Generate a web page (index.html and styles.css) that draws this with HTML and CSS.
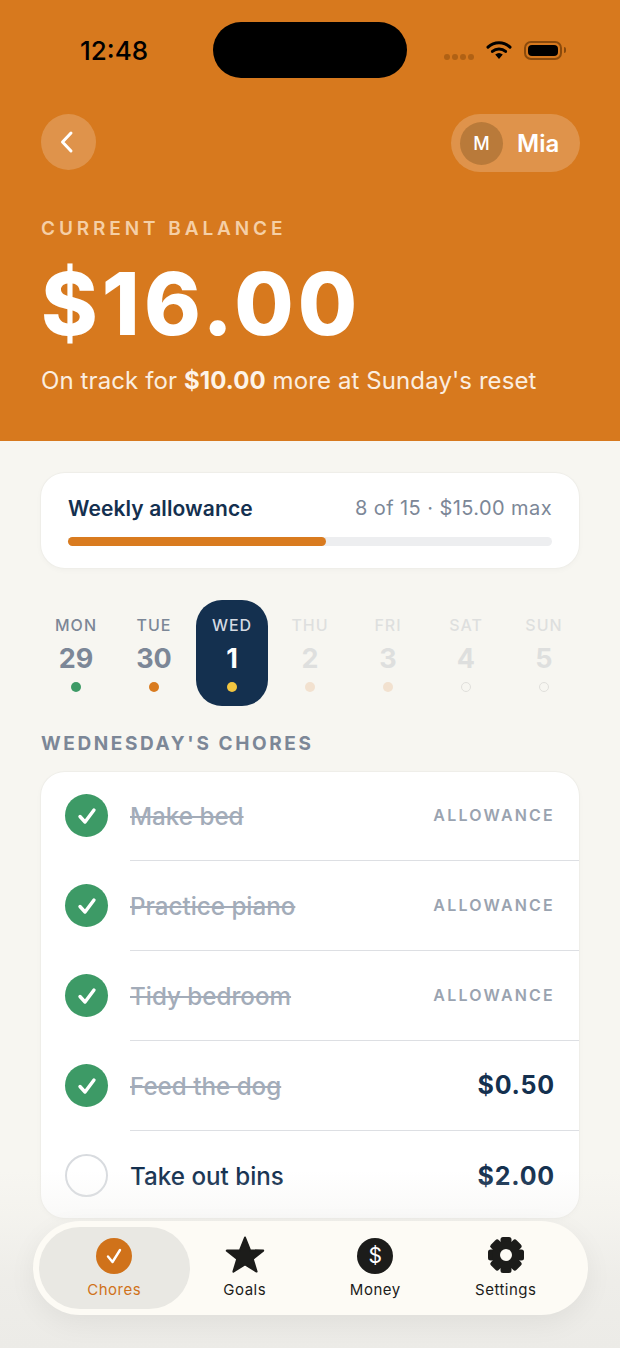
FILE: index.html
```html
<!DOCTYPE html>
<html lang="en">
<head>
  <meta charset="UTF-8">
  <meta name="viewport" content="width=device-width, initial-scale=1.0">
  <title>Chores</title>
  <link rel="stylesheet" href="styles.css">
</head>
<body>

<div class="screen">

  <!-- Orange header -->
  <div class="hero">
    <div class="status-bar">
      <span class="time">12:48</span>
      <div class="island"></div>
      <div class="status-icons">
        <div class="signal"><i></i><i></i><i></i><i></i></div>
        <svg class="wifi" width="26" height="20" viewBox="0 0 26 20">
          <path d="M2 7.2a16 16 0 0 1 22 0" fill="none" stroke="#000" stroke-width="3" stroke-linecap="round"/>
          <path d="M6.4 11.4a10 10 0 0 1 13.2 0" fill="none" stroke="#000" stroke-width="3" stroke-linecap="round"/>
          <path d="M9.2 14.6 13 19l3.8-4.4a6 6 0 0 0-7.6 0z" fill="#000"/>
        </svg>
        <div class="battery"><div class="battery-fill"></div></div>
        <div class="battery-tip"></div>
      </div>
    </div>

    <div class="top-row">
      <div class="back-btn">
        <svg width="16" height="24" viewBox="0 0 16 24">
          <path d="M12 3 3.5 12 12 21" fill="none" stroke="#fff" stroke-width="3" stroke-linecap="round" stroke-linejoin="round"/>
        </svg>
      </div>
      <div class="profile">
        <div class="avatar">M</div>
        <span class="profile-name">Mia</span>
      </div>
    </div>

    <div class="balance-label">CURRENT BALANCE</div>
    <div class="balance">$16.00</div>
    <div class="balance-note">On track for <b>$10.00</b> more at Sunday's reset</div>
  </div>

  <!-- Main Content -->
  <div class="content">

    <div class="allowance-card">
      <div class="allowance-head">
        <span class="allowance-title">Weekly allowance</span>
        <span class="allowance-info">8 of 15 · $15.00 max</span>
      </div>
      <div class="progress"><div class="progress-fill" style="width: 53.3%"></div></div>
    </div>

    <div class="days">
      <div class="day"><span class="day-name">MON</span><span class="day-num">29</span><span class="dot dot-green"></span></div>
      <div class="day"><span class="day-name">TUE</span><span class="day-num">30</span><span class="dot dot-orange"></span></div>
      <div class="day active"><span class="day-name">WED</span><span class="day-num">1</span><span class="dot dot-yellow"></span></div>
      <div class="day future"><span class="day-name">THU</span><span class="day-num">2</span><span class="dot dot-peach"></span></div>
      <div class="day future"><span class="day-name">FRI</span><span class="day-num">3</span><span class="dot dot-peach"></span></div>
      <div class="day future"><span class="day-name">SAT</span><span class="day-num">4</span><span class="dot dot-empty"></span></div>
      <div class="day future"><span class="day-name">SUN</span><span class="day-num">5</span><span class="dot dot-empty"></span></div>
    </div>

    <h2 class="section-title">WEDNESDAY'S CHORES</h2>

    <div class="chores">
      <div class="chore">
        <div class="check done"><svg width="22" height="20" viewBox="0 0 22 20"><path d="M4 10.5 9 16 18 4" fill="none" stroke="#fff" stroke-width="3.4" stroke-linecap="round" stroke-linejoin="round"/></svg></div>
        <div class="chore-body"><span class="chore-name">Make bed</span><span class="chore-tag">ALLOWANCE</span></div>
      </div>
      <div class="chore">
        <div class="check done"><svg width="22" height="20" viewBox="0 0 22 20"><path d="M4 10.5 9 16 18 4" fill="none" stroke="#fff" stroke-width="3.4" stroke-linecap="round" stroke-linejoin="round"/></svg></div>
        <div class="chore-body"><span class="chore-name">Practice piano</span><span class="chore-tag">ALLOWANCE</span></div>
      </div>
      <div class="chore">
        <div class="check done"><svg width="22" height="20" viewBox="0 0 22 20"><path d="M4 10.5 9 16 18 4" fill="none" stroke="#fff" stroke-width="3.4" stroke-linecap="round" stroke-linejoin="round"/></svg></div>
        <div class="chore-body"><span class="chore-name">Tidy bedroom</span><span class="chore-tag">ALLOWANCE</span></div>
      </div>
      <div class="chore">
        <div class="check done"><svg width="22" height="20" viewBox="0 0 22 20"><path d="M4 10.5 9 16 18 4" fill="none" stroke="#fff" stroke-width="3.4" stroke-linecap="round" stroke-linejoin="round"/></svg></div>
        <div class="chore-body"><span class="chore-name">Feed the dog</span><span class="chore-price">$0.50</span></div>
      </div>
      <div class="chore todo">
        <div class="check"></div>
        <div class="chore-body"><span class="chore-name">Take out bins</span><span class="chore-price">$2.00</span></div>
      </div>
    </div>
  </div>

  <!-- Fade under the tab bar -->
  <div class="bottom-fade"></div>

  <!-- Tab bar -->
  <div class="tab-bar">
    <div class="tab active">
      <div class="tab-coin tab-coin-orange">
        <svg width="22" height="22" viewBox="0 0 22 22"><path d="M5 11.5 9.5 17 17 5" fill="none" stroke="#fff" stroke-width="2.4" stroke-linecap="round" stroke-linejoin="round"/></svg>
      </div>
      <span>Chores</span>
    </div>
    <div class="tab">
      <svg width="40" height="40" viewBox="0 0 40 40"><path d="M20 2.5 25 15.2 38.2 15.6 27.8 24 31.6 36.6 20 29.4 8.4 36.6 12.2 24 1.8 15.6 15 15.2z" fill="#1c1c1a" stroke="#1c1c1a" stroke-width="2" stroke-linejoin="round"/></svg>
      <span>Goals</span>
    </div>
    <div class="tab">
      <div class="tab-coin">$</div>
      <span>Money</span>
    </div>
    <div class="tab">
      <svg width="40" height="40" viewBox="0 0 40 40">
        <g fill="#1c1c1a">
          <rect x="14.5" y="2" width="11" height="36" rx="2.5"/>
          <rect x="14.5" y="2" width="11" height="36" rx="2.5" transform="rotate(45 20 20)"/>
          <rect x="14.5" y="2" width="11" height="36" rx="2.5" transform="rotate(90 20 20)"/>
          <rect x="14.5" y="2" width="11" height="36" rx="2.5" transform="rotate(135 20 20)"/>
          <circle cx="20" cy="20" r="14"/>
        </g>
        <circle cx="20" cy="20" r="6" fill="#fdfbf5"/>
      </svg>
      <span>Settings</span>
    </div>
  </div>

</div>

</body>
</html>
```

FILE: styles.css
```css
/* Base Styles */
* {
  margin: 0;
  padding: 0;
  box-sizing: border-box;
  font-family: Inter, "Liberation Sans", sans-serif;
}

body {
  background-color: #f7f6f1;
}

.screen {
  position: relative;
  width: 620px;
  height: 1348px;
  overflow: hidden;
}

/* Header */
.hero {
  height: 441px;
  background: #d7791e;
  padding: 22px 40px 0 41px;
  color: white;
}

.status-bar {
  position: relative;
  display: flex;
  justify-content: space-between;
  align-items: center;
  height: 56px;
  padding: 0 14px 0 39px;
}

.time {
  color: #000;
  font-size: 26px;
  font-weight: 500;
}

.island {
  position: absolute;
  left: 172px;
  top: 0;
  width: 194px;
  height: 56px;
  border-radius: 28px;
  background: #000;
}

.status-icons {
  display: flex;
  align-items: center;
}

.signal {
  display: flex;
  gap: 2px;
  margin: 14px 12px 0 0;
  opacity: 0.5;
}

.signal i {
  width: 6px;
  height: 6px;
  border-radius: 50%;
  background: #8a4a0c;
}

.wifi {
  margin-right: 12px;
}

.battery {
  width: 38px;
  height: 19px;
  padding: 2px;
  border: 2px solid #8a4a0c;
  border-radius: 7px;
}

.battery-fill {
  height: 100%;
  border-radius: 4px;
  background: #000;
}

.battery-tip {
  width: 2px;
  height: 6px;
  margin-left: 2px;
  border-radius: 0 2px 2px 0;
  background: #8a4a0c;
}

.top-row {
  display: flex;
  justify-content: space-between;
  align-items: flex-start;
  margin-top: 36px;
}

.back-btn {
  display: flex;
  align-items: center;
  justify-content: center;
  width: 55px;
  height: 56px;
  padding-right: 4px;
  border-radius: 50%;
  background: rgba(255, 255, 255, 0.2);
}

.profile {
  display: flex;
  align-items: center;
  gap: 14px;
  width: 129px;
  height: 58px;
  padding-left: 9px;
  border-radius: 29px;
  background: rgba(255, 255, 255, 0.2);
}

.avatar {
  display: flex;
  align-items: center;
  justify-content: center;
  width: 43px;
  height: 43px;
  border-radius: 50%;
  background: #b97a3a;
  font-size: 18px;
  font-weight: 500;
}

.profile-name {
  font-size: 24px;
  font-weight: 600;
}

.balance-label {
  margin-top: 45px;
  color: #f5cfa6;
  font-size: 19px;
  font-weight: 600;
  letter-spacing: 3.9px;
}

.balance {
  margin-top: 14px;
  font-size: 86px;
  line-height: 100px;
  font-weight: 800;
  letter-spacing: 4.1px;
}

.balance-note {
  margin-top: 12px;
  color: #fbeee0;
  font-size: 24px;
  letter-spacing: 0.1px;
}

.balance-note b {
  color: #fdf3e8;
  font-weight: 700;
}

/* Main Content */
.content {
  padding: 32px 41px 0;
}

.allowance-card {
  height: 95px;
  padding: 20px 27px 0;
  background: white;
  border-radius: 24px;
  box-shadow: 0 0 0 1px #efeee9, 0 2px 6px rgba(0, 0, 0, 0.03);
}

.allowance-head {
  display: flex;
  justify-content: space-between;
  align-items: center;
  height: 30px;
}

.allowance-title {
  color: #14304f;
  font-size: 21px;
  font-weight: 600;
  letter-spacing: 0.1px;
}

.allowance-info {
  color: #7c8797;
  font-size: 20px;
  letter-spacing: 0.42px;
}

.progress {
  height: 9px;
  margin-top: 14px;
  border-radius: 5px;
  background: #edeef0;
}

.progress-fill {
  height: 100%;
  border-radius: 5px;
  background: #d97b1f;
}

/* Week strip */
.days {
  display: grid;
  grid-template-columns: repeat(7, 72px);
  gap: 6px;
  margin: 32px 0 0 -1px;
}

.day {
  display: flex;
  flex-direction: column;
  align-items: center;
  height: 106px;
  padding-top: 15px;
  border-radius: 26px;
}

.day.active {
  background: #14304f;
}

.day.future {
  opacity: 0.2;
}

.day-name {
  color: #7c8797;
  font-size: 16px;
  line-height: 20px;
  font-weight: 500;
  letter-spacing: 1px;
}

.day-num {
  margin-top: 7px;
  color: #7c8797;
  font-size: 27px;
  line-height: 34px;
  font-weight: 700;
}

.active .day-name {
  color: #d5dae2;
}

.active .day-num {
  color: white;
}

.dot {
  width: 10px;
  height: 10px;
  margin-top: 6px;
  border-radius: 50%;
}

.dot-green { background: #3d9a66; }
.dot-orange { background: #d97b1f; }
.dot-yellow { background: #f2c540; }
.dot-peach { background: #e08f4a; }
.dot-empty { border: 1px solid #888; }

.section-title {
  margin-top: 27px;
  color: #7c8797;
  font-size: 19px;
  line-height: 22px;
  font-weight: 700;
  letter-spacing: 2.6px;
}

/* Chore list */
.chores {
  height: 446px;
  margin-top: 17px;
  background: white;
  border-radius: 24px;
  box-shadow: 0 0 0 1px #efeee9, 0 2px 6px rgba(0, 0, 0, 0.03);
  overflow: hidden;
}

.chore {
  display: flex;
  align-items: stretch;
  height: 90px;
  padding-left: 24px;
}

.check {
  flex: none;
  display: flex;
  align-items: center;
  justify-content: center;
  width: 43px;
  height: 43px;
  margin: 22px 22px 0 0;
  border: 2.5px solid #d8dbdf;
  border-radius: 50%;
}

.check.done {
  border: none;
  background: #3d9a66;
}

.chore-body {
  flex: 1;
  display: flex;
  justify-content: space-between;
  align-items: center;
  height: 89px;
  padding: 0 24px 0 0;
  border-bottom: 1px solid #dddfe3;
}

.todo .chore-body {
  border-bottom: none;
}

.chore-name {
  color: #a3acb9;
  font-size: 24.2px;
  font-weight: 500;
  text-decoration: line-through;
}

.todo .chore-name {
  color: #14304f;
  text-decoration: none;
}

.chore-tag {
  margin-bottom: 2px;
  color: #9aa3b0;
  font-size: 16px;
  font-weight: 600;
  letter-spacing: 2.2px;
}

.chore-price {
  margin-bottom: 2px;
  color: #14304f;
  font-size: 25px;
  font-weight: 700;
  letter-spacing: 0.8px;
}

/* Tab bar */
.bottom-fade {
  position: absolute;
  left: 0;
  right: 0;
  bottom: 0;
  height: 178px;
  background: linear-gradient(rgba(236, 235, 231, 0), rgba(236, 235, 231, 0.3) 27%, rgba(236, 235, 231, 0.8) 60%, #ecebe7);
}

.tab-bar {
  position: absolute;
  left: 33px;
  top: 1221px;
  display: grid;
  grid-template-columns: repeat(4, 1fr);
  width: 555px;
  height: 94px;
  padding: 6px 17px 6px 16px;
  border-radius: 47px;
  background: #fdfbf5;
  box-shadow: 0 8px 28px rgba(0, 0, 0, 0.06);
}

.tab {
  display: flex;
  flex-direction: column;
  align-items: center;
  justify-content: flex-end;
  gap: 5px;
  padding-bottom: 9px;
  color: #1c1c1a;
  font-size: 15px;
  line-height: 20px;
  font-weight: 400;
  letter-spacing: 0.5px;
  border-radius: 41px;
}

.tab.active {
  margin: 0 -10px;
  background: #e9e8e3;
  color: #d0721a;
}

.tab-coin {
  display: flex;
  align-items: center;
  justify-content: center;
  width: 36px;
  height: 36px;
  margin-bottom: 1px;
  border-radius: 50%;
  background: #1c1c1a;
  color: white;
  font-size: 21px;
  font-weight: 400;
  letter-spacing: 0;
}

.tab-coin-orange {
  background: #d0721a;
}
```
